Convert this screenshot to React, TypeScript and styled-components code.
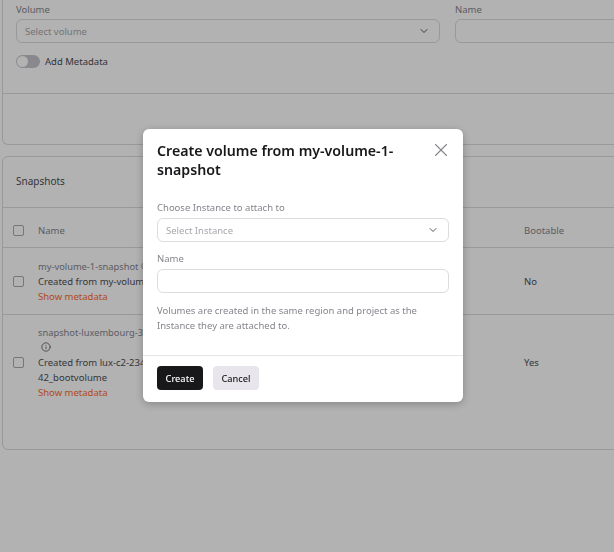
import styled, { createGlobalStyle } from 'styled-components'
import { ChevronDown, Info, X } from 'lucide-react'

const GlobalStyle = createGlobalStyle`
    html, body {
        margin: 0;
        height: 100%;
        overflow: hidden;
        background: #fff;
        font-family: 'Noto Sans', sans-serif;
        font-size: 9.5px;
        line-height: 15px;
        color: #4e4e55;
    }
    * {
        box-sizing: border-box;
    }
`

const Page = styled.div`
    width: 720px;
    padding-left: 2px;
    display: flex;
    flex-direction: column;
    gap: 11px;
`

const Card = styled.section<{ $height: number; $open?: boolean }>`
    height: ${(p) => p.$height}px;
    border: 1px solid #dcdce0;
    border-top-width: ${(p) => (p.$open ? 0 : 1)}px;
    border-radius: ${(p) => (p.$open ? '0 0 6px 6px' : '6px')};
`

const FormSection = styled.div`
    height: 94px;
    padding: 3px 13px 0;
    border-bottom: 1px solid #dcdce0;
`

const FormGrid = styled.div`
    display: grid;
    grid-template-columns: 424px 1fr;
    column-gap: 15px;
`

const Field = styled.div`
    display: flex;
    flex-direction: column;
`

const Label = styled.label`
    color: #85858d;
    height: 15px;
    line-height: 14px;
`

const Control = styled.div`
    height: 24px;
    margin-top: 2px;
    padding: 0 9px 0 8px;
    display: flex;
    align-items: center;
    justify-content: space-between;
    border: 1px solid #dcdce0;
    border-radius: 6px;
    background: #fff;
    color: #a6a6ad;

    svg {
        color: #222226;
    }
`

const TopControl = styled(Control)`
    margin-top: 1px;
`

const ToggleRow = styled.div`
    margin-top: 11px;
    display: flex;
    align-items: center;
    gap: 5px;
`

const Toggle = styled.span`
    width: 24px;
    height: 13px;
    padding: 1px;
    border-radius: 7px;
    background: #c4c3ca;
    display: flex;

    &::before {
        content: '';
        width: 11px;
        height: 11px;
        border-radius: 50%;
        background: #fff;
    }
`

const CardTitle = styled.h2`
    margin: 0;
    height: 51px;
    padding: 0 0 2px 13px;
    display: flex;
    align-items: center;
    font-size: 10px;
    font-weight: 400;
    border-bottom: 1px solid #dcdce0;
`

const Row = styled.div`
    display: grid;
    grid-template-columns: 11px 150px 308px 90px;
    column-gap: 14px;
    align-items: center;
    padding: 11px 0 10px 10px;

    & + & {
        border-bottom: 1px solid #dcdce0;
    }

    &:last-child {
        padding-top: 10px;
        border-bottom: 0;
    }
`

const HeadRow = styled(Row)`
    height: 40px;
    padding: 6px 0 0 10px;
    color: #85858d;
    border-bottom: 1px solid #dcdce0;
`

const Checkbox = styled.span`
    width: 11px;
    height: 11px;
    border: 1px solid #a9a9b0;
    border-radius: 2px;
    background: #fff;
`

const NameCell = styled.div`
    display: flex;
    flex-direction: column;
`

const SnapshotName = styled.span`
    font-size: 9.3px;
    color: #85858d;
`

const InlineInfo = styled(Info)`
    margin-left: 3px;
    vertical-align: -1px;
`

const WrappedInfo = styled(Info)`
    display: block;
    margin: 2px 0 3px 3px;
    color: #5a5a60;
`

const MetaLink = styled.a`
    color: #ff6a1f;
`

const Overlay = styled.div`
    position: fixed;
    inset: 0;
    padding: 129px 0 0 143px;
    background: rgba(0, 0, 0, 0.3);
`

const Modal = styled.div`
    width: 320px;
    height: 273px;
    border-radius: 6px;
    background: #fff;
    box-shadow: 0 2px 8px rgba(0, 0, 0, 0.25);
    display: flex;
    flex-direction: column;
`

const ModalHeader = styled.div`
    padding: 12px 14px 0;
    display: flex;
    justify-content: space-between;
    align-items: flex-start;
`

const ModalTitle = styled.h1`
    margin: 0;
    width: 250px;
    font-size: 14.2px;
    line-height: 19px;
    font-weight: 600;
    color: #18181b;
`

const CloseButton = styled.button`
    padding: 0;
    margin: -2px -3px 0 0;
    border: 0;
    background: none;
    color: #85858d;
    display: flex;
`

const ModalBody = styled.div`
    padding: 22px 14px 0;
    display: flex;
    flex-direction: column;
    gap: 10px;
`

const HelpText = styled.p`
    margin: 0;
    color: #85858d;
`

const ModalFooter = styled.div`
    margin-top: auto;
    height: 47px;
    padding: 10px 14px 0;
    display: flex;
    gap: 10px;
    border-top: 1px solid #e6e6ea;
`

const Button = styled.button<{ $primary?: boolean }>`
    width: 46px;
    height: 24px;
    padding: 0;
    border: 0;
    border-radius: 4px;
    font: 500 9.2px 'Noto Sans', sans-serif;
    background: ${(p) => (p.$primary ? '#18181b' : '#e8e6ec')};
    color: ${(p) => (p.$primary ? '#fff' : '#18181b')};
`

export default function App() {
    return (
        <>
            <GlobalStyle />
            <Page>
                <Card $height={145} $open>
                    <FormSection>
                        <FormGrid>
                            <Field>
                                <Label>Volume</Label>
                                <TopControl>
                                    Select volume
                                    <ChevronDown size={12} strokeWidth={1.5} />
                                </TopControl>
                            </Field>
                            <Field>
                                <Label>Name</Label>
                                <TopControl />
                            </Field>
                        </FormGrid>
                        <ToggleRow>
                            <Toggle />
                            Add Metadata
                        </ToggleRow>
                    </FormSection>
                </Card>
                <Card $height={294}>
                    <CardTitle>Snapshots</CardTitle>
                    <HeadRow>
                        <Checkbox />
                        <span>Name</span>
                        <span />
                        <span>Bootable</span>
                    </HeadRow>
                    <Row>
                        <Checkbox />
                        <NameCell>
                            <SnapshotName>
                                my-volume-1-snapshot
                                <InlineInfo size={10} />
                            </SnapshotName>
                            <span>Created from my-volume-1</span>
                            <MetaLink>Show metadata</MetaLink>
                        </NameCell>
                        <span />
                        <span>No</span>
                    </Row>
                    <Row>
                        <Checkbox />
                        <NameCell>
                            <SnapshotName>
                                snapshot-luxembourg-3
                                <WrappedInfo size={10} />
                            </SnapshotName>
                            <span>Created from lux-c2-2342</span>
                            <span>42_bootvolume</span>
                            <MetaLink>Show metadata</MetaLink>
                        </NameCell>
                        <span />
                        <span>Yes</span>
                    </Row>
                </Card>
            </Page>
            <Overlay>
                <Modal>
                    <ModalHeader>
                        <ModalTitle>Create volume from my-volume-1-snapshot</ModalTitle>
                        <CloseButton>
                            <X size={22} strokeWidth={1.2} />
                        </CloseButton>
                    </ModalHeader>
                    <ModalBody>
                        <Field>
                            <Label>Choose Instance to attach to</Label>
                            <Control>
                                Select Instance
                                <ChevronDown size={12} strokeWidth={1.5} />
                            </Control>
                        </Field>
                        <Field>
                            <Label>Name</Label>
                            <Control />
                        </Field>
                        <HelpText>
                            Volumes are created in the same region and project as the Instance they
                            are attached to.
                        </HelpText>
                    </ModalBody>
                    <ModalFooter>
                        <Button $primary>Create</Button>
                        <Button>Cancel</Button>
                    </ModalFooter>
                </Modal>
            </Overlay>
        </>
    )
}
